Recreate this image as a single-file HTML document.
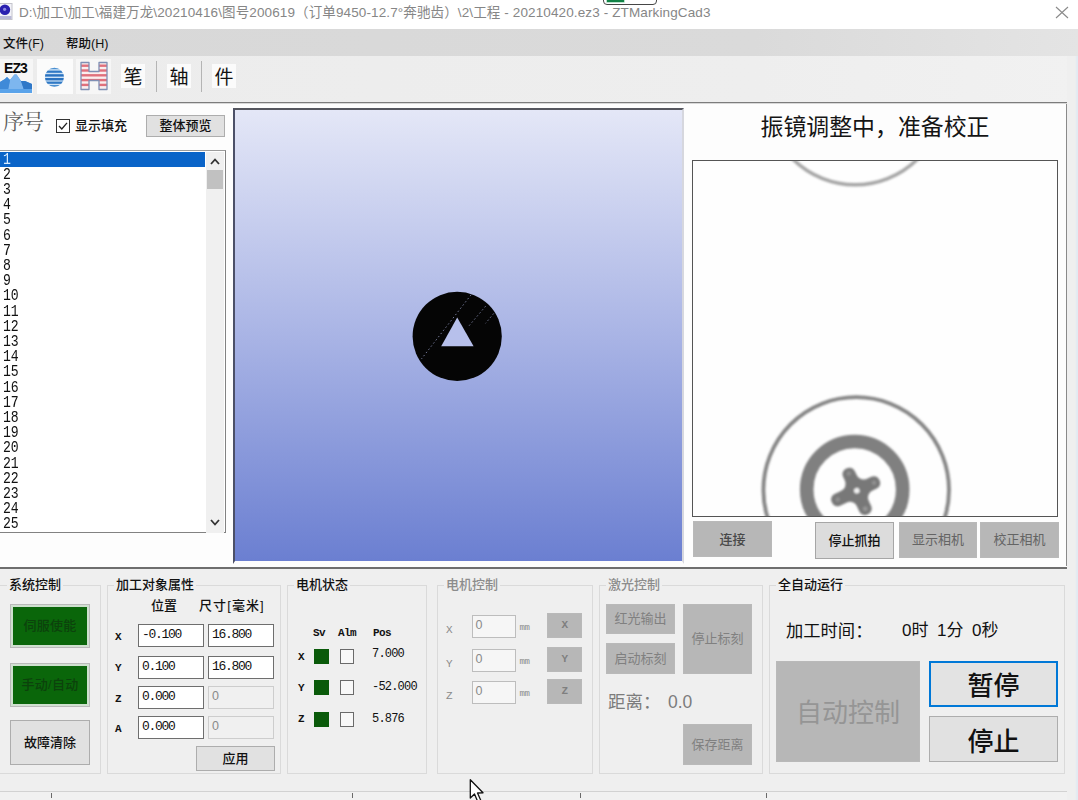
<!DOCTYPE html>
<html lang="zh-CN">
<head>
<meta charset="utf-8">
<title>ZTMarkingCad3</title>
<style>
*{box-sizing:border-box;margin:0;padding:0}
html,body{width:1078px;height:800px;overflow:hidden;background:#f0f0f0}
body{position:relative;font-family:"Liberation Sans","Noto Sans CJK SC",sans-serif;font-size:13px;color:#111}
.abs{position:absolute}
.sun{font-family:"Liberation Serif","Noto Serif CJK SC",serif}
.mono{font-family:"Liberation Mono","Noto Sans CJK SC",monospace}
#title{left:0;top:0;width:1078px;height:29px;background:#fff;overflow:hidden}
#title .t{left:19px;top:2.5px;font-size:13.5px;line-height:20px;color:#868686;white-space:nowrap;letter-spacing:0.12px}
#menu{left:0;top:29px;width:1078px;height:27px;background:linear-gradient(90deg,#d8d8d8 0%,#dadada 70%,#e4e4e4 100%)}
#menu span{position:absolute;top:6px;font-weight:500;font-size:12.5px;line-height:18px;color:#111}
#tool{left:0;top:56px;width:1078px;height:46px;background:linear-gradient(90deg,#ececec 0%,#eeeeee 70%,#f1f1f1 100%)}
.tb{top:8px;width:24px;height:24px;background:#fbfbfb;font-size:19px;line-height:27px;overflow:hidden;text-align:center;color:#111}
#sepTop{left:0;top:102px;width:1067px;height:2px;background:linear-gradient(180deg,#7c7c7c 0,#7c7c7c 1.4px,#d8d8d8 1.4px);z-index:3}
#left{left:0;top:103px;width:684px;height:464px;background:#fdfdfd}
#right{left:684px;top:103px;width:383px;height:465px;background:#fdfdfd;border-right:1px solid #8a8a8a}
#rightEdge{left:1067px;top:56px;width:11px;height:744px;background:linear-gradient(90deg,#efefef 0,#efefef 8px,#e2eaf2 10px)}
.btn{position:absolute;background:#e1e1e1;border:1px solid #adadad;text-align:center;white-space:nowrap;color:#111;font-weight:500}
.dbtn{position:absolute;background:#b7b7b7;border:1px solid #b9b9b9;color:#777;text-align:center;white-space:nowrap}
.grp{position:absolute;border:1px solid #dadada}
.grp>.lab{position:absolute;top:-9px;left:6px;background:#efefef;padding:0 2px;font-size:13px;line-height:16px;white-space:nowrap;font-weight:500}
.edit{position:absolute;background:#fff;border:1px solid #6e6e6e;font-family:"Liberation Mono",monospace;font-size:13px;letter-spacing:-1.3px;padding-left:3px;white-space:nowrap;color:#111}
.edit.dis{background:#f0f0f0;border-color:#cdcdcd;color:#8a8a8a;font-family:"Liberation Sans",sans-serif;font-size:12.5px;letter-spacing:0}
#list{left:0;top:46.6px;width:226px;height:383.4px;background:#fff;border:1px solid #828282;border-top:1.5px solid #9c9c9c;border-left:none}
#list .r{position:absolute;left:0;width:205px;height:15px;font-family:"Liberation Mono",monospace;font-size:16px;line-height:16.5px;padding-left:2.5px;color:#111;overflow:hidden}
#list .r span{display:inline-block;transform:scaleX(.82);transform-origin:0 50%}
#list .sel{background:#0a64c8;color:#d8ecff}
#sb{position:absolute;left:206px;top:1px;width:18px;height:381px;background:#f0f0f0}
#canvas{left:233px;top:108.4px;width:451.4px;height:456px;background:linear-gradient(180deg,#e4e7f7 0%,#a9b4e5 50%,#6b7fd1 100%);border-left:2px solid #4c5068;border-top:2px solid #55565e;border-bottom:3.6px solid #fdfdfd;border-right:2px solid #d6d7de;background-clip:padding-box}
#bottom{left:0;top:566px;width:1067px;height:234px;background:#efefef;border-top:2px solid #fdfdfd}
#sepBot{left:0;top:567px;width:1067px;height:1.8px;background:#6e6e6e}

.gbtn{position:absolute;padding-bottom:4px;letter-spacing:0.3px;background:#0a660a;border:3px solid #cfe0cf;outline:1px solid #b9b9b9;outline-offset:-1px;text-align:center;font-size:13px;font-weight:500;color:#0c420c;white-space:nowrap;display:flex;align-items:center;justify-content:center}
.axl{font-family:"Liberation Mono",monospace;font-size:11px;line-height:14px;font-weight:bold;color:#111;white-space:nowrap;letter-spacing:-0.6px}
.num{font-family:"Liberation Mono",monospace;font-size:12px;line-height:16px;color:#111;white-space:nowrap;letter-spacing:-0.8px}
</style>
</head>
<body>
<!-- TITLE BAR -->
<div id="title" class="abs">
  <svg class="abs" style="left:0;top:3px" width="13" height="17" viewBox="0 0 13 17"><rect x="-1" y="0.5" width="13" height="16" fill="#f2f2f8" stroke="#c4c4cc"/><circle cx="4.9" cy="6.8" r="5.3" fill="#2a20b0"/><circle cx="4.6" cy="6.3" r="1.6" fill="#8f8ae0"/><rect x="0" y="13" width="11.5" height="3" fill="#b9b9d6"/></svg>
  <div class="abs t">D:\加工\加工\福建万龙\20210416\图号200619（订单9450-12.7°奔驰齿）\2\工程 - 20210420.ez3 - ZTMarkingCad3</div>
  <svg class="abs" style="left:1055px;top:6px" width="14" height="13" viewBox="0 0 14 13"><path d="M1 1 L13 12 M13 1 L1 12" stroke="#8a8a8a" stroke-width="1.1" fill="none"/></svg>
  <div class="abs" style="left:603.3px;top:-8px;width:54px;height:12.8px;border:1.6px solid #464646;border-radius:4px;background:#fff"></div>
  <div class="abs" style="left:606.5px;top:0;width:17.5px;height:2.4px;background:#128246;box-shadow:0 0 0 0.6px #8fd0ac"></div>
</div>
<!-- MENU BAR -->
<div id="menu" class="abs"><span style="left:3px">文件(F)</span><span style="left:66px">帮助(H)</span></div>
<!-- TOOLBAR -->
<div id="tool" class="abs">
  <!-- EZ3 icon -->
  <div class="abs" style="left:0;top:3px;width:33px;height:35px;background:#f6f6f6"></div>
  <div class="abs" style="left:4px;top:4px;font:bold 14px/17px 'Liberation Sans',sans-serif;color:#0a0a0a;letter-spacing:-0.9px">EZ3</div>
  <svg class="abs" style="left:0;top:17px" width="33" height="21" viewBox="0 0 33 21">
    <path d="M0 9 L5 6 L7 4 L10 7 L14.5 1.5 L16.5 1.5 L21 8 L25 8 L32 11 L32 20 L0 20 Z" fill="#4f95de"/>
    <path d="M10 7 L14.5 1.5 L16.5 1.5 L21 8 L24 17 L8 17 Z" fill="#7db6ef"/>
    <path d="M0 9 L5 6 L7 4 L10 7 L8 17 L0 16 Z" fill="#3f8ad8"/>
    <path d="M21 8 L25 8 L32 11 L32 17 L24 17 Z" fill="#2f78c8"/>
    <path d="M0 16 L32 16 L32 20 L0 20 Z" fill="#5aa3ea"/>
  </svg>
  <!-- globe icon -->
  <div class="abs" style="left:37px;top:3px;width:36px;height:35px;background:#fbfbfb"></div>
  <svg class="abs" style="left:44px;top:11px" width="21" height="21" viewBox="0 0 21 21">
    <defs><clipPath id="gc"><circle cx="10.4" cy="10.2" r="9.5"/></clipPath></defs>
    <g clip-path="url(#gc)">
      <rect width="21" height="21" fill="#cfe3f6"/>
      <rect y="0" width="21" height="2.2" fill="#4b8fd0"/>
      <rect y="3.6" width="21" height="2.2" fill="#2f78c4"/>
      <rect y="7.2" width="21" height="2.4" fill="#2a72c0"/>
      <rect y="11" width="21" height="2.4" fill="#2a72c0"/>
      <rect y="14.6" width="21" height="2.2" fill="#2f78c4"/>
      <rect y="18" width="21" height="2.4" fill="#4b8fd0"/>
    </g>
  </svg>
  <!-- H icon -->
  <div class="abs" style="left:76px;top:3px;width:35px;height:35px;background:#f6f6f6"></div>
  <svg class="abs" style="left:79px;top:5px" width="30" height="30" viewBox="0 0 30 30">
    <defs><clipPath id="hc"><path d="M2 1.5 h8 v9 h10 v-9 h8 v27 h-8 v-9 h-10 v9 h-8 z"/></clipPath></defs>
    <g clip-path="url(#hc)">
      <rect width="30" height="30" fill="#fbeeee"/>
      <rect y="3.5" width="30" height="2.4" fill="#e0707c"/>
      <rect y="8.3" width="30" height="2.4" fill="#e0707c"/>
      <rect y="13.1" width="30" height="2.4" fill="#e0707c"/>
      <rect y="17.9" width="30" height="2.4" fill="#e0707c"/>
      <rect y="22.7" width="30" height="2.4" fill="#e0707c"/>
    </g>
    <path d="M2 1.5 h8 v9 h10 v-9 h8 v27 h-8 v-9 h-10 v9 h-8 z" fill="none" stroke="#7f8fb4" stroke-width="1.3" stroke-linejoin="round"/>
  </svg>
  <!-- text tools -->
  <div class="abs tb" style="left:121px">笔</div>
  <div class="abs" style="left:156px;top:5px;width:1px;height:31px;background:#b4b4b4"></div>
  <div class="abs tb" style="left:167px">轴</div>
  <div class="abs" style="left:201px;top:5px;width:1px;height:31px;background:#b4b4b4"></div>
  <div class="abs tb" style="left:212px">件</div>
</div>
<div id="sepTop" class="abs"></div>
<div id="left" class="abs">
  <div class="abs sun" style="left:3px;top:7px;font-size:21px;line-height:24px;color:#5a5a5a;letter-spacing:-1px">序号</div>
  <svg class="abs" style="left:56px;top:16px" width="14" height="14" viewBox="0 0 14 14"><rect x="0.5" y="0.5" width="13" height="13" fill="#fff" stroke="#333"/><path d="M3 7 L5.8 10 L11 3.8" fill="none" stroke="#222" stroke-width="1.3"/></svg>
  <div class="abs" style="left:75px;top:14px;font-size:13px;line-height:18px;color:#111;font-weight:500">显示填充</div>
  <div class="btn" style="left:146px;top:12px;width:79px;height:22px;font-size:13px;line-height:20px">整体预览</div>
  <div id="list" class="abs"><div class="r sel" style="top:1.0px"><span>1</span></div><div class="r" style="top:16.2px"><span>2</span></div><div class="r" style="top:31.4px"><span>3</span></div><div class="r" style="top:46.6px"><span>4</span></div><div class="r" style="top:61.8px"><span>5</span></div><div class="r" style="top:77.0px"><span>6</span></div><div class="r" style="top:92.2px"><span>7</span></div><div class="r" style="top:107.4px"><span>8</span></div><div class="r" style="top:122.6px"><span>9</span></div><div class="r" style="top:137.8px"><span>10</span></div><div class="r" style="top:153.0px"><span>11</span></div><div class="r" style="top:168.2px"><span>12</span></div><div class="r" style="top:183.4px"><span>13</span></div><div class="r" style="top:198.6px"><span>14</span></div><div class="r" style="top:213.8px"><span>15</span></div><div class="r" style="top:229.0px"><span>16</span></div><div class="r" style="top:244.2px"><span>17</span></div><div class="r" style="top:259.4px"><span>18</span></div><div class="r" style="top:274.6px"><span>19</span></div><div class="r" style="top:289.8px"><span>20</span></div><div class="r" style="top:305.0px"><span>21</span></div><div class="r" style="top:320.2px"><span>22</span></div><div class="r" style="top:335.4px"><span>23</span></div><div class="r" style="top:350.6px"><span>24</span></div><div class="r" style="top:365.8px"><span>25</span></div>
    <div id="sb">
      <svg class="abs" style="left:4px;top:6px" width="10" height="7" viewBox="0 0 10 7"><path d="M1 6 L5 1.5 L9 6" fill="none" stroke="#333" stroke-width="1.8"/></svg>
      <div class="abs" style="left:1px;top:18px;width:16px;height:19px;background:#c1c1c1"></div>
      <svg class="abs" style="left:4px;top:367px" width="10" height="7" viewBox="0 0 10 7"><path d="M1 1 L5 5.5 L9 1" fill="none" stroke="#333" stroke-width="1.8"/></svg>
    </div>
  </div>
</div>
<div id="right" class="abs">
  <div class="abs" style="left:0;top:9px;width:383px;text-align:center;font-size:22.9px;line-height:30px;color:#151515;white-space:nowrap"><span style="position:relative;left:-0.5px">振镜调整中，准备校正</span></div>
  <div class="abs" style="left:8px;top:57px;width:366px;height:357px;background:#fefefe;border:1px solid #555;overflow:hidden">
    <svg class="abs" style="left:0;top:0" width="364" height="355" viewBox="0 0 364 355">
      <defs><filter id="bl" x="-20%" y="-20%" width="140%" height="140%"><feGaussianBlur stdDeviation="0.9"/></filter></defs>
      <g filter="url(#bl)" fill="none">
        <circle cx="162.2" cy="-64.4" r="88.2" stroke="#a4a4a4" stroke-width="3.4"/>
        <circle cx="163.2" cy="329" r="92.8" stroke="#858585" stroke-width="3.8"/>
        <circle cx="161.7" cy="328.5" r="48" stroke="#808080" stroke-width="13.6"/>
        <g transform="translate(163.8,329.7) rotate(-25)">
          <rect x="-6.5" y="-24.5" width="13" height="50.5" rx="6" fill="#787878"/>
          <rect x="-27.5" y="-6.5" width="52.5" height="13" rx="6" fill="#787878"/>
          <path d="M-6 -15 Q-7 -7 -15 -6 L-15 6 Q-7 7 -6 15 L6 15 Q7 7 15 6 L15 -6 Q7 -7 6 -15 Z" fill="#787878"/>
          <circle cx="0" cy="0" r="2.8" fill="#f2f2f2"/>
          <circle cx="0" cy="-19" r="2.2" fill="#909090"/><circle cx="19" cy="0" r="2.2" fill="#929292"/><circle cx="0" cy="20" r="2.4" fill="#969696"/><circle cx="-21" cy="0" r="2.2" fill="#909090"/>
        </g>
      </g>
    </svg>
  </div>
  <div class="dbtn" style="left:9px;top:418px;width:79px;height:36px;font-size:13px;line-height:35px;color:#484848;font-weight:500">连接</div>
  <div class="btn" style="left:131px;top:419px;width:79px;height:37px;font-size:13px;line-height:36px;background:#dcdcdc;border-color:#a6a6a6">停止抓拍</div>
  <div class="dbtn" style="left:215px;top:419px;width:78px;height:36px;font-size:13px;line-height:33px;color:#646464">显示相机</div>
  <div class="dbtn" style="left:296px;top:419px;width:79px;height:36px;font-size:13px;line-height:33px;color:#646464">校正相机</div>
</div>
<div id="rightEdge" class="abs"></div>
<!-- CANVAS -->
<div id="canvas" class="abs">
  <svg class="abs" style="left:0;top:0.7px" width="448" height="450" viewBox="0 0 448 450">
    <circle cx="222.2" cy="225.4" r="44.6" fill="#050505"/>
    <path d="M222.2 206.5 L238.6 235.2 L206.2 235.2 Z" fill="#b7c0eb"/>
    <path d="M236 183.9 L186.4 248 M250.6 195.2 L232.7 216.4 M258.7 202.5 L250.6 212.3" stroke="#a8b0dc" stroke-width="0.9" stroke-dasharray="1.5 2.5" fill="none" opacity="0.75"/>
  </svg>
</div>
<!-- BOTTOM -->
<div id="sepBot" class="abs" style="z-index:3"></div>
<div id="bottom" class="abs">
<div class="grp" style="left:-1px;top:17px;width:102px;height:189px"><div class="lab" style="left:7px">系统控制</div></div>
<div class="gbtn" style="left:10px;top:36px;width:80px;height:44px"><span>伺服使能</span></div>
<div class="gbtn" style="left:10px;top:95px;width:80px;height:44px"><span>手动/自动</span></div>
<div class="btn" style="left:10px;top:152px;width:80px;height:45px;font-size:13px;line-height:43px">故障清除</div>
<div class="grp" style="left:107px;top:17px;width:174px;height:189px"><div class="lab" style="left:6px">加工对象属性</div></div>
<div class="abs" style="left:151px;top:30px;font-size:13px;line-height:16px;font-weight:500">位置</div>
<div class="abs" style="left:199px;top:30px;font-size:13px;line-height:16px;white-space:nowrap;letter-spacing:1.1px;font-weight:500">尺寸[毫米]</div>
<div class="abs axl" style="left:115px;top:61.5px">X</div>
<div class="edit" style="left:138px;top:56.0px;width:66px;height:23px;line-height:19px">-0.100</div>
<div class="edit" style="left:208px;top:56.0px;width:66px;height:23px;line-height:19px">16.800</div>
<div class="abs axl" style="left:115px;top:93.0px">Y</div>
<div class="edit" style="left:138px;top:87.5px;width:66px;height:23px;line-height:19px">0.100</div>
<div class="edit" style="left:208px;top:87.5px;width:66px;height:23px;line-height:19px">16.800</div>
<div class="abs axl" style="left:115px;top:123.5px">Z</div>
<div class="edit" style="left:138px;top:118.0px;width:66px;height:23px;line-height:19px">0.000</div>
<div class="edit dis" style="left:208px;top:118.0px;width:66px;height:23px;line-height:19px">0</div>
<div class="abs axl" style="left:115px;top:153.5px">A</div>
<div class="edit" style="left:138px;top:148.0px;width:66px;height:23px;line-height:19px">0.000</div>
<div class="edit dis" style="left:208px;top:148.0px;width:66px;height:23px;line-height:19px">0</div>
<div class="btn" style="left:196px;top:178px;width:79px;height:25px;font-size:13px;line-height:23px">应用</div>
<div class="grp" style="left:287px;top:17px;width:140px;height:189px"><div class="lab" style="left:6px">电机状态</div></div>
<div class="abs axl" style="left:313px;top:58px">Sv</div>
<div class="abs axl" style="left:338px;top:58px">Alm</div>
<div class="abs axl" style="left:373px;top:58px">Pos</div>
<div class="abs axl" style="left:298px;top:81.5px">X</div>
<div class="abs" style="left:313.5px;top:81.0px;width:15px;height:15px;background:#0a5a0a"></div>
<div class="abs" style="left:339.5px;top:81.0px;width:14px;height:15px;background:#f8f8f8;border:1px solid #6a6a6a"></div>
<div class="abs num" style="left:372px;top:78.2px">7.000</div>
<div class="abs axl" style="left:298px;top:112.5px">Y</div>
<div class="abs" style="left:313.5px;top:112.0px;width:15px;height:15px;background:#0a5a0a"></div>
<div class="abs" style="left:339.5px;top:112.0px;width:14px;height:15px;background:#f8f8f8;border:1px solid #6a6a6a"></div>
<div class="abs num" style="left:372px;top:111.0px">-52.000</div>
<div class="abs axl" style="left:298px;top:144.0px">Z</div>
<div class="abs" style="left:313.5px;top:143.5px;width:15px;height:15px;background:#0a5a0a"></div>
<div class="abs" style="left:339.5px;top:143.5px;width:14px;height:15px;background:#f8f8f8;border:1px solid #6a6a6a"></div>
<div class="abs num" style="left:372px;top:143.0px">5.876</div>
<div class="grp" style="left:437px;top:17px;width:156px;height:189px"><div class="lab" style="left:6px;color:#8c8c8c">电机控制</div></div>
<div class="abs axl" style="left:446px;top:55.0px;color:#8a8a8a;font-weight:normal">X</div>
<div class="edit dis" style="left:471.5px;top:47.0px;width:44px;height:23px;line-height:19px;background:#f6f6f6;border-color:#bdbdbd">0</div>
<div class="abs" style="left:519.5px;top:54.0px;font-family:'Liberation Mono',monospace;font-size:9px;line-height:12px;color:#8a8a8a;letter-spacing:-0.5px">mm</div>
<div class="dbtn axl" style="left:547px;top:45.0px;width:35px;height:25px;line-height:22px;color:#7f7f7f">X</div>
<div class="abs axl" style="left:446px;top:88.5px;color:#8a8a8a;font-weight:normal">Y</div>
<div class="edit dis" style="left:471.5px;top:80.5px;width:44px;height:23px;line-height:19px;background:#f6f6f6;border-color:#bdbdbd">0</div>
<div class="abs" style="left:519.5px;top:87.5px;font-family:'Liberation Mono',monospace;font-size:9px;line-height:12px;color:#8a8a8a;letter-spacing:-0.5px">mm</div>
<div class="dbtn axl" style="left:547px;top:78.5px;width:35px;height:25px;line-height:22px;color:#7f7f7f">Y</div>
<div class="abs axl" style="left:446px;top:121.0px;color:#8a8a8a;font-weight:normal">Z</div>
<div class="edit dis" style="left:471.5px;top:113.0px;width:44px;height:23px;line-height:19px;background:#f6f6f6;border-color:#bdbdbd">0</div>
<div class="abs" style="left:519.5px;top:120.0px;font-family:'Liberation Mono',monospace;font-size:9px;line-height:12px;color:#8a8a8a;letter-spacing:-0.5px">mm</div>
<div class="dbtn axl" style="left:547px;top:111.0px;width:35px;height:25px;line-height:22px;color:#7f7f7f">Z</div>
<div class="grp" style="left:599px;top:17px;width:164px;height:189px"><div class="lab" style="left:6px;color:#8c8c8c">激光控制</div></div>
<div class="dbtn" style="left:606px;top:36px;width:69px;height:30px;font-size:13px;line-height:28px;color:#808080">红光输出</div>
<div class="dbtn" style="left:606px;top:75px;width:69px;height:31px;font-size:13px;line-height:29px;color:#808080">启动标刻</div>
<div class="dbtn" style="left:683px;top:36px;width:69px;height:70px;font-size:13px;line-height:68px;color:#808080">停止标刻</div>
<div class="abs" style="left:608px;top:122px;font-size:17.5px;line-height:24px;color:#7c7c7c;white-space:nowrap">距离：</div>
<div class="abs" style="left:668px;top:122px;font-size:17.5px;line-height:24px;color:#7c7c7c;white-space:nowrap">0.0</div>
<div class="dbtn" style="left:683px;top:155.5px;width:69px;height:41px;font-size:13px;line-height:39px;color:#808080">保存距离</div>
<div class="grp" style="left:769px;top:17px;width:296px;height:189px"><div class="lab" style="left:6px">全自动运行</div></div>
<div class="abs" style="left:786px;top:51px;font-size:17.3px;line-height:24px;white-space:nowrap">加工时间：</div>
<div class="abs" style="left:902px;top:51px;font-size:17px;line-height:24px;white-space:pre;word-spacing:3.8px">0时 1分 0秒</div>
<div class="dbtn" style="left:776px;top:93px;width:144px;height:101px;font-size:26px;line-height:103px;color:#959595;background:#b7b7b7">自动控制</div>
<div class="btn" style="left:929px;top:93px;width:129px;height:46px;font-size:26px;line-height:47px;border:2px solid #0078d7;background:#e3e3e3">暂停</div>
<div class="btn" style="left:929px;top:148px;width:129px;height:46px;font-size:26px;line-height:50px;background:#e1e1e1">停止</div>
<div class="abs" style="left:0;top:223px;width:1067px;height:9px;background:#f1f1f1;border-top:1px solid #d2d2d2"></div>
<div class="abs" style="left:51px;top:224.5px;width:1px;height:5px;background:#6a6a6a"></div>
<div class="abs" style="left:352px;top:224.5px;width:1px;height:5px;background:#6a6a6a"></div>
<div class="abs" style="left:580px;top:224.5px;width:1px;height:5px;background:#6a6a6a"></div>
<div class="abs" style="left:766px;top:224.5px;width:1px;height:5px;background:#6a6a6a"></div>
<svg class="abs" style="left:468px;top:210px" width="18" height="24" viewBox="0 0 18 24"><path d="M2.3 1.8 L2.3 20 L6.5 16 L9.8 23.8 L12.8 22.4 L9.5 15 L15 14.8 Z" fill="#fff" stroke="#111" stroke-width="1.3" stroke-linejoin="round"/></svg>
</div>
</body>
</html>
